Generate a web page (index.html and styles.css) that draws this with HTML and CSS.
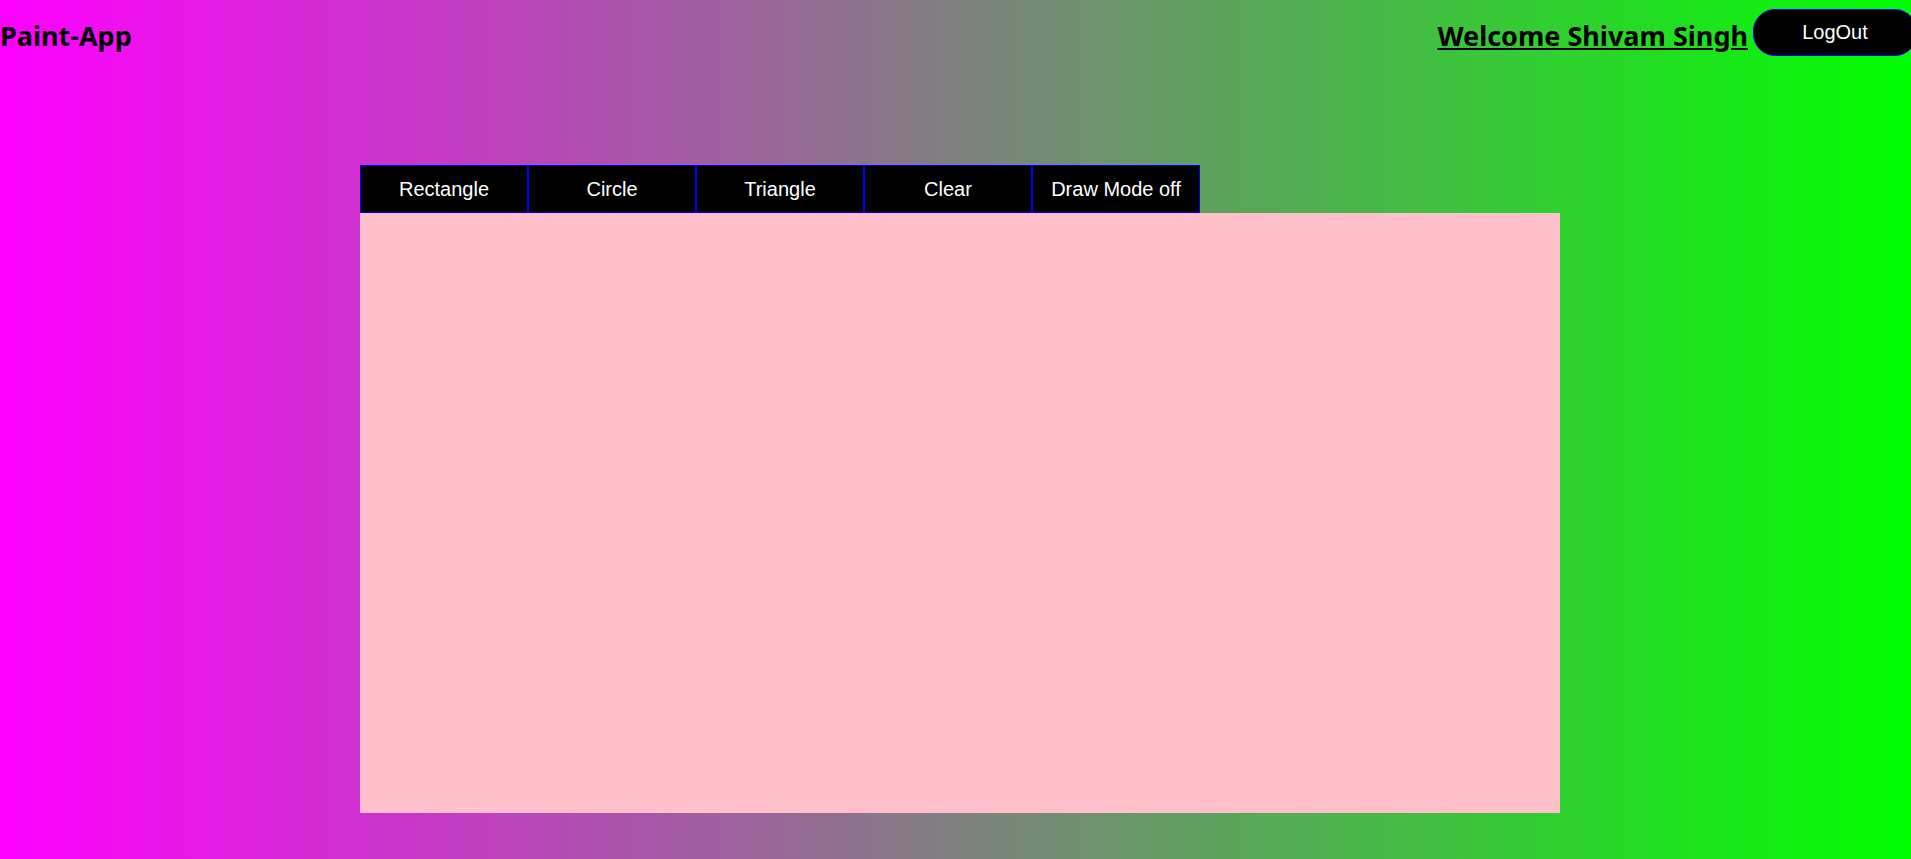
FILE: index.html
```html
<!DOCTYPE html>
<html lang="en">
<head>
<meta charset="utf-8">
<title>Paint-App</title>
<link rel="stylesheet" href="styles.css">
</head>
<body>
<header class="header">
  <h2 class="brand">Paint-App</h2>
  <div class="user">
    <a class="welcome" href="#">Welcome Shivam Singh</a>
    <button class="logout">LogOut</button>
  </div>
</header>
<main class="main">
  <div class="tools">
    <button class="tool">Rectangle</button>
    <button class="tool">Circle</button>
    <button class="tool">Triangle</button>
    <button class="tool">Clear</button>
    <button class="tool">Draw Mode off</button>
  </div>
  <div class="canvas"></div>
</main>
</body>
</html>
```

FILE: styles.css
```css
html, body {
  margin: 0;
  padding: 0;
  height: 100%;
  overflow: hidden;
}
body {
  background: linear-gradient(to right, #ff00ff, #00ff00);
  font-family: "Liberation Sans", Arial, sans-serif;
}
.header {
  display: flex;
  justify-content: space-between;
  align-items: center;
  height: 65px;
}
.brand {
  margin: 0;
  font-family: "Noto Sans", "Open Sans", sans-serif;
  font-weight: 700;
  font-size: 27px;
  color: #000;
  padding-top: 5px;
}
.user {
  display: flex;
  align-items: center;
  gap: 5px;
  margin-right: -6px;
}
.welcome {
  font-family: "Noto Sans", "Open Sans", sans-serif;
  font-weight: 700;
  font-size: 27px;
  color: #000;
  text-decoration: underline;
  padding-top: 5px;
}
.logout {
  width: 164px;
  height: 47px;
  background: #000;
  color: #fff;
  border: 1px solid #0000ff;
  border-radius: 22px;
  font-family: "Liberation Sans", Arial, sans-serif;
  font-size: 20px;
  padding: 0;
}
.main {
  padding-left: 360px;
  padding-top: 100px;
}
.tools {
  display: flex;
}
.tool {
  width: 168px;
  height: 48px;
  box-sizing: border-box;
  background: #000;
  color: #fff;
  border: 1px solid #0000ff;
  font-family: "Liberation Sans", Arial, sans-serif;
  font-size: 20px;
  padding: 0;
}
.canvas {
  width: 1200px;
  height: 600px;
  background: #ffc0cb;
}
```
